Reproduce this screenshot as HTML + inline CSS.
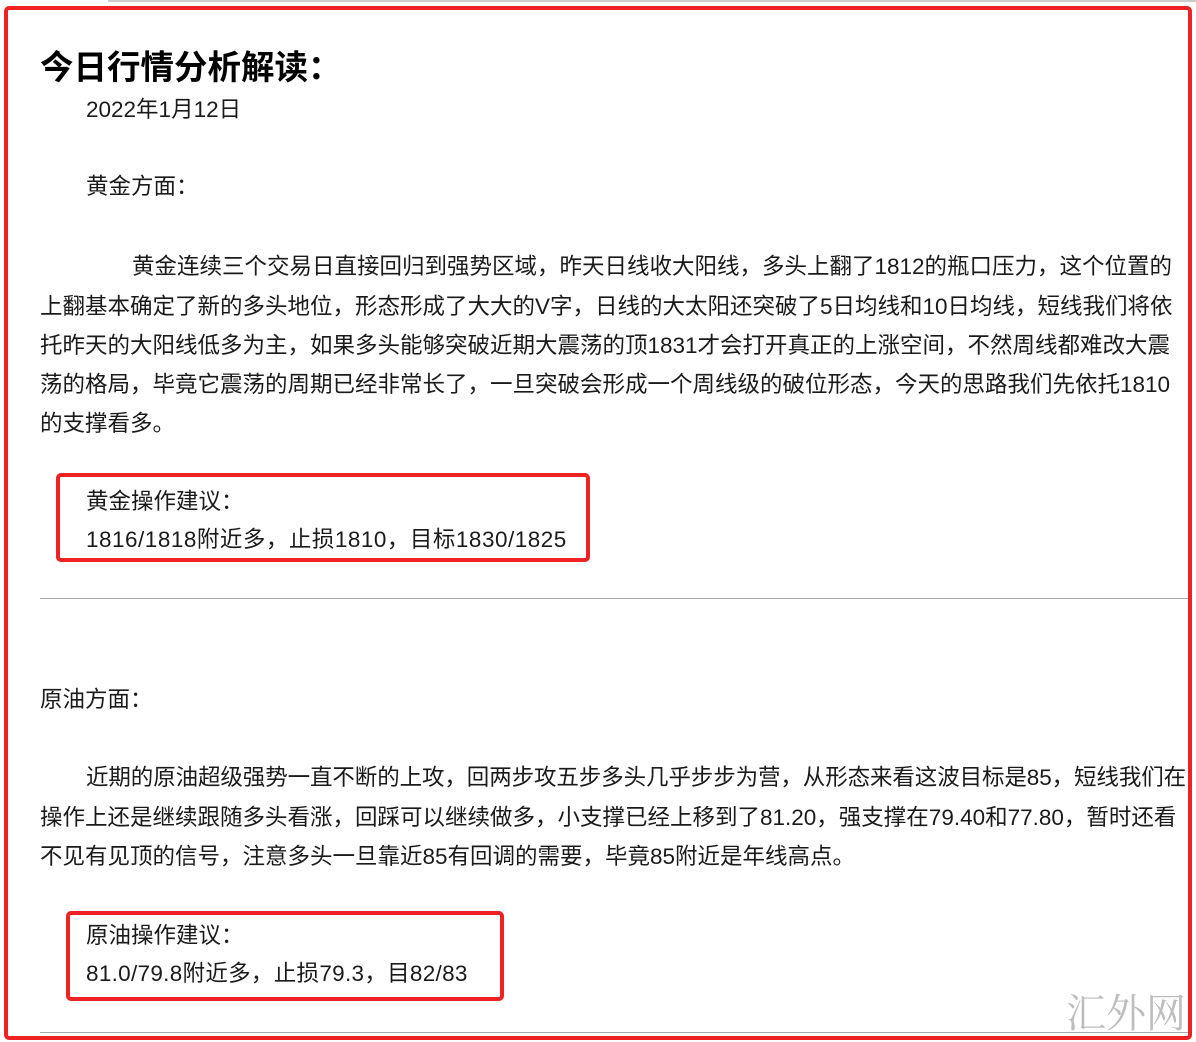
<!DOCTYPE html>
<html><head><meta charset="utf-8"><style>
body{margin:0;width:1196px;height:1042px;background:#fff;position:relative;overflow:hidden;font-family:"Liberation Sans","Noto Sans CJK SC",sans-serif;color:#1a1a1a}
.l{position:absolute;white-space:nowrap;font-size:22.5px;line-height:26px}
.box{position:absolute;border:4px solid #ee2222;border-radius:5px}
.hr{position:absolute;height:1px;background:#a8a8a8}
</style></head><body>
<div style="position:absolute;left:108px;top:0;width:1088px;height:2px;background:#ccc"></div>
<div class="box" style="left:4px;top:6px;width:1180px;height:1026px;border-width:4px"></div>
<div class="l" style="left:40px;top:50px;font-size:33.5px;line-height:38px;font-weight:bold;color:#000">今日行情分析解读：</div>
<div class="l" style="left:86px;top:97px">2022年1月12日</div>
<div class="l" style="left:86px;top:174px">黄金方面：</div>
<div class="l" style="left:132px;top:254px">黄金连续三个交易日直接回归到强势区域，昨天日线收大阳线，多头上翻了1812的瓶口压力，这个位置的</div>
<div class="l" style="left:40px;top:294px">上翻基本确定了新的多头地位，形态形成了大大的V字，日线的大太阳还突破了5日均线和10日均线，短线我们将依</div>
<div class="l" style="left:40px;top:333px">托昨天的大阳线低多为主，如果多头能够突破近期大震荡的顶1831才会打开真正的上涨空间，不然周线都难改大震</div>
<div class="l" style="left:40px;top:372px">荡的格局，毕竟它震荡的周期已经非常长了，一旦突破会形成一个周线级的破位形态，今天的思路我们先依托1810</div>
<div class="l" style="left:40px;top:411px">的支撑看多。</div>
<div class="box" style="left:56px;top:473px;width:526px;height:81px"></div>
<div class="l" style="left:86px;top:489px">黄金操作建议：</div>
<div class="l" style="left:86px;top:527px;letter-spacing:0.5px">1816/1818附近多，止损1810，目标1830/1825</div>
<div class="hr" style="left:40px;top:598px;width:1148px"></div>
<div class="l" style="left:40px;top:687px">原油方面：</div>
<div class="l" style="left:86px;top:765px;letter-spacing:-0.1px">近期的原油超级强势一直不断的上攻，回两步攻五步多头几乎步步为营，从形态来看这波目标是85，短线我们在</div>
<div class="l" style="left:40px;top:805px">操作上还是继续跟随多头看涨，回踩可以继续做多，小支撑已经上移到了81.20，强支撑在79.40和77.80，暂时还看</div>
<div class="l" style="left:40px;top:844px">不见有见顶的信号，注意多头一旦靠近85有回调的需要，毕竟85附近是年线高点。</div>
<div class="box" style="left:66px;top:911px;width:430px;height:82px"></div>
<div class="l" style="left:86px;top:923px">原油操作建议：</div>
<div class="l" style="left:86px;top:961px;letter-spacing:0.3px">81.0/79.8附近多，止损79.3，目82/83</div>
<div class="hr" style="left:40px;top:1032px;width:1148px"></div>
<div class="l" style="left:1066px;top:988px;font-size:40px;line-height:46px;color:#bdbdbd;font-family:'Noto Serif CJK SC',serif">汇外网</div>
</body></html>
